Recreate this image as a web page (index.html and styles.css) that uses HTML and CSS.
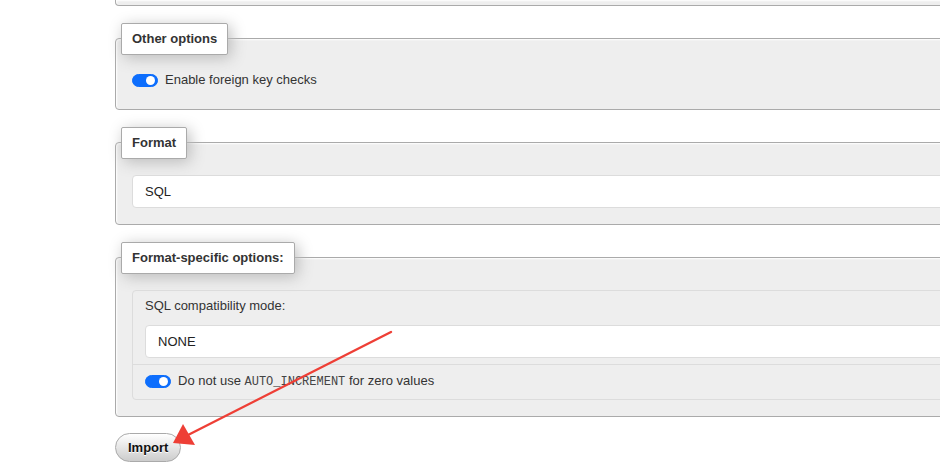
FILE: index.html
```html
<!DOCTYPE html>
<html lang="en">
  <head>
    <meta charset="UTF-8" />
    <meta name="viewport" content="width=device-width, initial-scale=1.0" />
    <title>Import</title>
    <link rel="stylesheet" href="styles.css">
  </head>
  <body>
    <div class="page">
      <!-- previous fieldset, scrolled out of view -->
      <div class="panel panel-cut"></div>

      <section class="panel">
        <div class="legend">Other options</div>
        <div class="panel-body">
          <label class="check-row first">
            <span class="switch on"></span>
            <span>Enable foreign key checks</span>
          </label>
        </div>
      </section>

      <section class="panel">
        <div class="legend">Format</div>
        <div class="panel-body">
          <div class="select">SQL</div>
        </div>
      </section>

      <section class="panel">
        <div class="legend">Format-specific options:</div>
        <div class="panel-body">
          <ul class="list-group">
            <li class="list-item">
              <label class="field-label">SQL compatibility mode:</label>
              <div class="select">NONE</div>
            </li>
            <li class="list-item">
              <label class="check-row">
                <span class="switch on"></span>
                <span>Do not use <code>AUTO_INCREMENT</code> for zero values</span>
              </label>
            </li>
          </ul>
        </div>
      </section>

      <button class="btn-import">Import</button>
    </div>

    <!-- annotation arrow drawn over the screenshot -->
    <svg class="annotation" width="940" height="471" viewBox="0 0 940 471">
      <line x1="391" y1="332" x2="188" y2="435" stroke="#ee3f36" stroke-width="2.4" stroke-linecap="round" />
      <polygon points="173,443 183,424 195,445" fill="#ee3f36" />
    </svg>
  </body>
</html>
```

FILE: styles.css
```css
* {
  margin: 0;
  padding: 0;
  box-sizing: border-box;
}

body {
  font-family: "Liberation Sans", Arial, sans-serif;
  font-size: 13px;
  line-height: 20px;
  color: #333;
  background: #fff;
  overflow: hidden;
  height: 471px;
}

.page {
  margin-left: 115px;
  width: 880px;
}

/* Fieldsets */
.panel {
  margin-top: 32px;
  padding: 0 16px 16px;
  background: #eee;
  border: 1px solid #aaa;
  border-radius: 4px;
  box-shadow: 1px 1px 2px #fff inset;
}

.panel-cut {
  margin-top: 0;
  height: 6px;
  padding: 0;
  border-top: none;
  border-radius: 0 0 4px 4px;
}

.legend {
  display: block;
  width: max-content;
  margin: -16px 0 0 -11px;
  padding: 5px 10px;
  height: 32px;
  font-weight: bold;
  color: #333;
  background: #fff;
  border: 1px solid #aaa;
  border-radius: 2px;
  box-shadow: 3px 3px 15px #bbb;
}

.panel-body {
  margin-top: 16px;
}

/* Switches */
.check-row {
  display: flex;
  align-items: center;
  gap: 7px;
  height: 20px;
}

.check-row.first {
  margin: -1px 0 3px;
}

.switch {
  position: relative;
  width: 26px;
  height: 13px;
  border-radius: 7px;
  background: #0d6efd;
  border: 1px solid #0d6efd;
  flex-shrink: 0;
}

.switch::after {
  content: "";
  position: absolute;
  right: 2px;
  top: 1px;
  width: 9px;
  height: 9px;
  border-radius: 50%;
  background: #fff;
}

code {
  font-family: "Liberation Mono", Consolas, monospace;
  font-size: 12px;
  color: #444;
}

/* Selects */
.select {
  height: 33px;
  padding: 6px 12px 5px;
  background: #fff;
  border: 1px solid #dcdcdc;
  border-radius: 4px;
  color: #222;
}

/* List group */
.list-group {
  list-style: none;
  border: 1px solid #dcdcdc;
  border-radius: 4px;
}

.list-item {
  padding: 5px 12px 6px;
}

.list-item + .list-item {
  border-top: 1px solid #dcdcdc;
  padding: 6px 12px 8px;
}

.field-label {
  display: block;
  margin-bottom: 9px;
}

/* Button */
.btn-import {
  margin-top: 16px;
  height: 29px;
  padding: 4px 12px;
  font-family: inherit;
  font-size: 13px;
  line-height: 19px;
  font-weight: bold;
  color: #111;
  text-shadow: 0 1px 0 #fff;
  background: linear-gradient(#fff, #ccc);
  border: 1px solid #aaa;
  border-radius: 20px;
  cursor: pointer;
}

.annotation {
  position: absolute;
  left: 0;
  top: 0;
  pointer-events: none;
}
```
